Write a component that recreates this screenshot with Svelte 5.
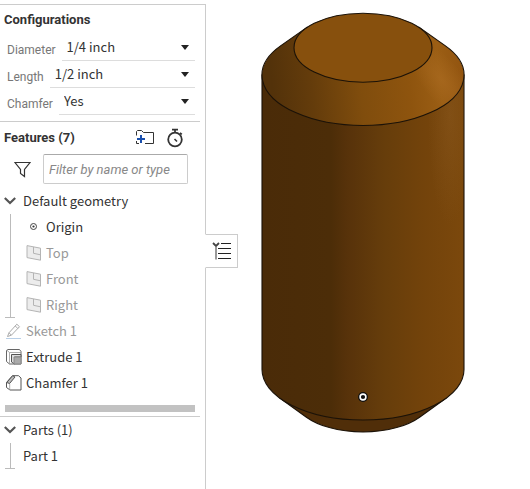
<script>
  const configurations = [
    { id: 'diameter', label: 'Diameter', value: '1/4 inch', options: ['1/4 inch', '1/2 inch'] },
    { id: 'length', label: 'Length', value: '1/2 inch', options: ['1/2 inch', '1 inch'] },
    { id: 'chamfer', label: 'Chamfer', value: 'Yes', options: ['Yes', 'No'] }
  ];
  const geometry = [
    { name: 'Origin', icon: 'origin' },
    { name: 'Top', icon: 'plane', muted: true },
    { name: 'Front', icon: 'plane', muted: true },
    { name: 'Right', icon: 'plane', muted: true }
  ];
  const features = [
    { name: 'Sketch 1', icon: 'sketch', muted: true },
    { name: 'Extrude 1', icon: 'extrude' },
    { name: 'Chamfer 1', icon: 'chamfer' }
  ];
  let filter = $state('');
</script>

{#snippet icon(kind)}
  <svg class="icon" width="16" height="16" viewBox="0 0 16 16" fill="none" aria-hidden="true">
    {#if kind === 'origin'}
      <circle cx="7.5" cy="7.5" r="3" stroke="#444" />
      <circle cx="7.5" cy="7.5" r="1.1" fill="#333" />
    {:else if kind === 'plane'}
      <path d="M1 .6 14.5 3.2V15.2L1 12.6Z" fill="#ececec" stroke="#b4b4b4" />
      <path d="M7.5 2V8.3L14.5 9.8" stroke="#b4b4b4" />
    {:else if kind === 'sketch'}
      <path d="M0 15.5H15" stroke="#b9cfe6" />
      <path d="M1.5 13.5 3 9.8 10.8 1.2 13.5 3.7 5.4 12.2Z M3 9.8 5.4 12.2 M9.3 3 11.8 5.5" stroke="#aaa" />
    {:else if kind === 'extrude'}
      <path d="M.5 1.5 2 .5H13.5L15 2.5V15H3.5L.5 12.5Z" fill="#fff" stroke="#666" />
      <path d="M.8 1.2 3.5 3.5H15M3.5 3.5V15" stroke="#999" stroke-width=".8" />
      <path d="M5.5 5.5H15V8H8.5V15L5.5 13Z" fill="#ddd" stroke="#555" />
      <path d="M8 8H15V15H8Z" fill="#aaa" stroke="#888" />
    {:else}
      <path d="M.5 7.5 6.5.7H12.5L15 3V15H4L.5 12.5Z" fill="#fff" stroke="#555" />
      <path d="M.7 7.5 6.7.7 9 2 3.6 8.5Z" fill="#bbb" stroke="#555" />
      <path d="M3.7 9V15" stroke="#999" stroke-width=".8" />
    {/if}
  </svg>
{/snippet}

{#snippet chevron()}
  <svg width="12" height="8" viewBox="0 0 12 8" fill="none" aria-hidden="true">
    <path d="M.8 1 6 6 11.2 1" stroke="#555" stroke-width="2.2" />
  </svg>
{/snippet}

<div class="app">
  <aside>
    <section class="config">
      <h2>Configurations</h2>
      {#each configurations as item}
        <div class="field">
          <label for={item.id}>{item.label}</label>
          <div class="select">
            <select id={item.id} value={item.value}>
              {#each item.options as option}<option>{option}</option>{/each}
            </select>
          </div>
        </div>
      {/each}
    </section>

    <section class="features">
      <header>
        <h2>Features (7)</h2>
        <button aria-label="Add folder">
          <svg width="20" height="20" viewBox="0 0 20 20" fill="none">
            <path d="M1.5 7.5V3.5L2.5 2.5H6.5L8.5 4.5H18.5V15.5H10M1.5 13V15.5H4" stroke="#333" />
            <path d="M6 7V15M2 11H10" stroke="#1b50ad" stroke-width="2" />
          </svg>
        </button>
        <button aria-label="Regeneration times">
          <svg width="20" height="20" viewBox="0 0 20 20" fill="none" stroke="#333">
            <circle cx="10" cy="11.5" r="6.8" stroke-width="1.8" />
            <path d="M7 1.6H13M10 2V5M15 4.8 16.8 6.4" stroke-width="1.7" />
            <path d="M9.5 11 12 13.5" stroke-width="1.6" />
          </svg>
        </button>
      </header>
      <div class="filter">
        <svg width="17" height="17" viewBox="0 0 17 17" fill="none" aria-hidden="true">
          <path d="M1 1.5H16L10.5 8.5V15.5L6.5 12.5V8.5Z" stroke="#333" stroke-width="1.2" />
        </svg>
        <input type="text" aria-label="Filter features" placeholder="Filter by name or type" bind:value={filter} />
      </div>

      <button class="group">{@render chevron()}Default geometry</button>
      <ul class="branch">
        {#each geometry as item}
          <li class:muted={item.muted}>{@render icon(item.icon)}{item.name}</li>
        {/each}
      </ul>
      <ul class="list">
        {#each features as item}
          <li class:muted={item.muted}>{@render icon(item.icon)}{item.name}</li>
        {/each}
      </ul>
      <div class="rollback"></div>
    </section>

    <section class="parts">
      <button class="group">{@render chevron()}Parts (1)</button>
      <ul class="branch"><li>Part 1</li></ul>
    </section>

    <button class="toggle" aria-label="Toggle feature list">
      <svg width="20" height="20" viewBox="0 0 20 20" fill="none">
        <path d="M1 2 4 5 7 2" stroke="#444" stroke-width="1.8" />
        <path d="M4 6V18.5" stroke="#999" stroke-width="2" />
        <path d="M9 2.5H19M6 7.5H19M6 12.5H19M6 17.5H19" stroke="#222" />
      </svg>
    </button>
  </aside>

  <main>
    <svg width="206" height="422" viewBox="260 12 206 422" role="img" aria-label="Chamfered pin">
      <defs>
        <linearGradient id="side" gradientUnits="userSpaceOnUse" x1="262" y1="0" x2="464" y2="0">
          <stop offset="0" stop-color="#4a2b08" />
          <stop offset=".34" stop-color="#4c2d08" />
          <stop offset=".42" stop-color="#57320a" />
          <stop offset=".6" stop-color="#663d0b" />
          <stop offset=".8" stop-color="#73430b" />
          <stop offset="1" stop-color="#7b480c" />
        </linearGradient>
        <linearGradient id="cone" gradientUnits="userSpaceOnUse" x1="270" y1="65" x2="464" y2="45">
          <stop offset="0" stop-color="#53320a" />
          <stop offset=".2" stop-color="#643c0b" />
          <stop offset=".45" stop-color="#804d0d" />
          <stop offset=".7" stop-color="#8e540e" />
          <stop offset=".86" stop-color="#9b5e14" />
          <stop offset="1" stop-color="#91530f" />
        </linearGradient>
        <radialGradient id="glow" gradientUnits="userSpaceOnUse" cx="0" cy="0" r="1" gradientTransform="translate(442 80) rotate(52) scale(46 20)">
          <stop offset="0" stop-color="#ac6c22" stop-opacity=".6" />
          <stop offset="1" stop-color="#ac6c22" stop-opacity="0" />
        </radialGradient>
        <radialGradient id="sheen" gradientUnits="userSpaceOnUse" cx="0" cy="0" r="1" gradientTransform="translate(450 115) scale(22 110)">
          <stop offset="0" stop-color="#96642a" stop-opacity=".3" />
          <stop offset="1" stop-color="#96642a" stop-opacity="0" />
        </radialGradient>
      </defs>
      <g stroke="#1b1208" stroke-width="1.1">
        <path d="M280.1 398.3 306.4 417.2A69 34.5 0 0 0 419.6 417.2L445.9 398.3Z" fill="#502e09" />
        <path d="M262 75V369.5A101 50.5 0 0 0 464 369.5V75Z" fill="url(#side)" />
        <path d="M262 75V369.5A101 50.5 0 0 0 464 369.5V75Z" fill="url(#sheen)" stroke="none" />
        <path d="M306.9 27.4 280.9 45.6A101 50.5 0 1 0 445.1 45.6L419.1 27.4Z" fill="url(#cone)" />
        <path d="M306.9 27.4 280.9 45.6A101 50.5 0 1 0 445.1 45.6L419.1 27.4Z" fill="url(#glow)" stroke="none" />
        <ellipse cx="363" cy="47.7" rx="69" ry="34.5" fill="#87500d" />
      </g>
      <circle cx="363" cy="397" r="5" fill="#111" />
      <circle cx="363" cy="397" r="2.9" fill="#111" stroke="#fff" stroke-width="1.6" />
    </svg>
  </main>
</div>

<style>
  .app {
    display: flex;
    min-height: 100vh;
    box-sizing: border-box;
    padding-top: 4px;
    background: #fff;
    color: #333;
    font: 13px/26px "Noto Sans CJK SC", "Noto Sans", sans-serif;
  }
  aside {
    position: relative;
    flex: 0 0 205px;
    min-width: 0;
    border-top: 1px solid #ccc;
    border-right: 1px solid #ccc;
  }
  h2, label, input { font-family: Roboto, sans-serif; }
  h2 { margin: 0; font-size: 13px; font-weight: 700; line-height: 20px; }
  button { padding: 0; border: 0; background: none; color: inherit; font: inherit; }
  svg { display: block; flex: none; }
  section { margin-right: 5px; }
  section + section { border-top: 1px solid #ccc; }

  .config { padding: 5px 5px 6px 4px; }
  .config h2 { margin-bottom: 4px; }
  .field { display: flex; gap: 6px; height: 27px; margin-left: 3px; }
  label { color: #777; font-size: 12px; line-height: 32px; }
  .select {
    position: relative;
    flex: 1;
    min-width: 0;
    border-bottom: 1px solid #ddd;
  }
  .select::after {
    content: "";
    position: absolute;
    right: 6px;
    top: 11px;
    border: 4px solid transparent;
    border-top: 5px solid #222;
    border-bottom: 0;
    pointer-events: none;
  }
  select {
    appearance: none;
    width: 100%;
    height: 26px;
    padding: 0 20px 0 5px;
    border: 0;
    background: none;
    color: #333;
    font: inherit;
  }

  header { display: flex; align-items: center; gap: 10px; height: 32px; padding: 0 15px 0 4px; }
  header h2 { flex: 1; }
  .filter { display: flex; align-items: center; gap: 12px; padding: 0 12px 4px 14px; }
  input {
    flex: 1;
    min-width: 0;
    box-sizing: border-box;
    height: 30px;
    padding: 0 5px;
    border: 1px solid #ccc;
    border-top-color: #aaa;
    border-radius: 2px;
    color: #333;
    font-size: 13px;
  }
  input::placeholder { color: #888; font-style: italic; opacity: 1; }

  .group { display: flex; align-items: center; gap: 7px; width: 100%; height: 26px; padding-left: 4px; }
  ul { margin: 0; padding: 0; list-style: none; }
  li { display: flex; align-items: center; gap: 4px; height: 26px; }
  .muted { color: #999; }
  .branch { position: relative; padding-left: 26px; }
  .branch::before {
    content: "";
    position: absolute;
    left: 10px;
    top: 0;
    bottom: 0;
    border-left: 1px solid #bbb;
  }
  .branch::after {
    content: "";
    position: absolute;
    left: 5px;
    bottom: 0;
    width: 10px;
    border-bottom: 1px solid #bbb;
  }
  .list { padding-left: 6px; }
  .rollback { height: 7px; margin: 9px 5px 4px; background: #c2c2c2; }
  .parts .branch { padding-left: 23px; }

  .toggle {
    position: absolute;
    left: 205px;
    top: 229px;
    display: grid;
    place-items: center;
    width: 33px;
    height: 34px;
    border: 1px solid #ccc;
    border-left-color: #fff;
    background: #fff;
  }
  main { flex: 1; min-width: 0; padding: 8px 0 0 54px; overflow: hidden; }
</style>
